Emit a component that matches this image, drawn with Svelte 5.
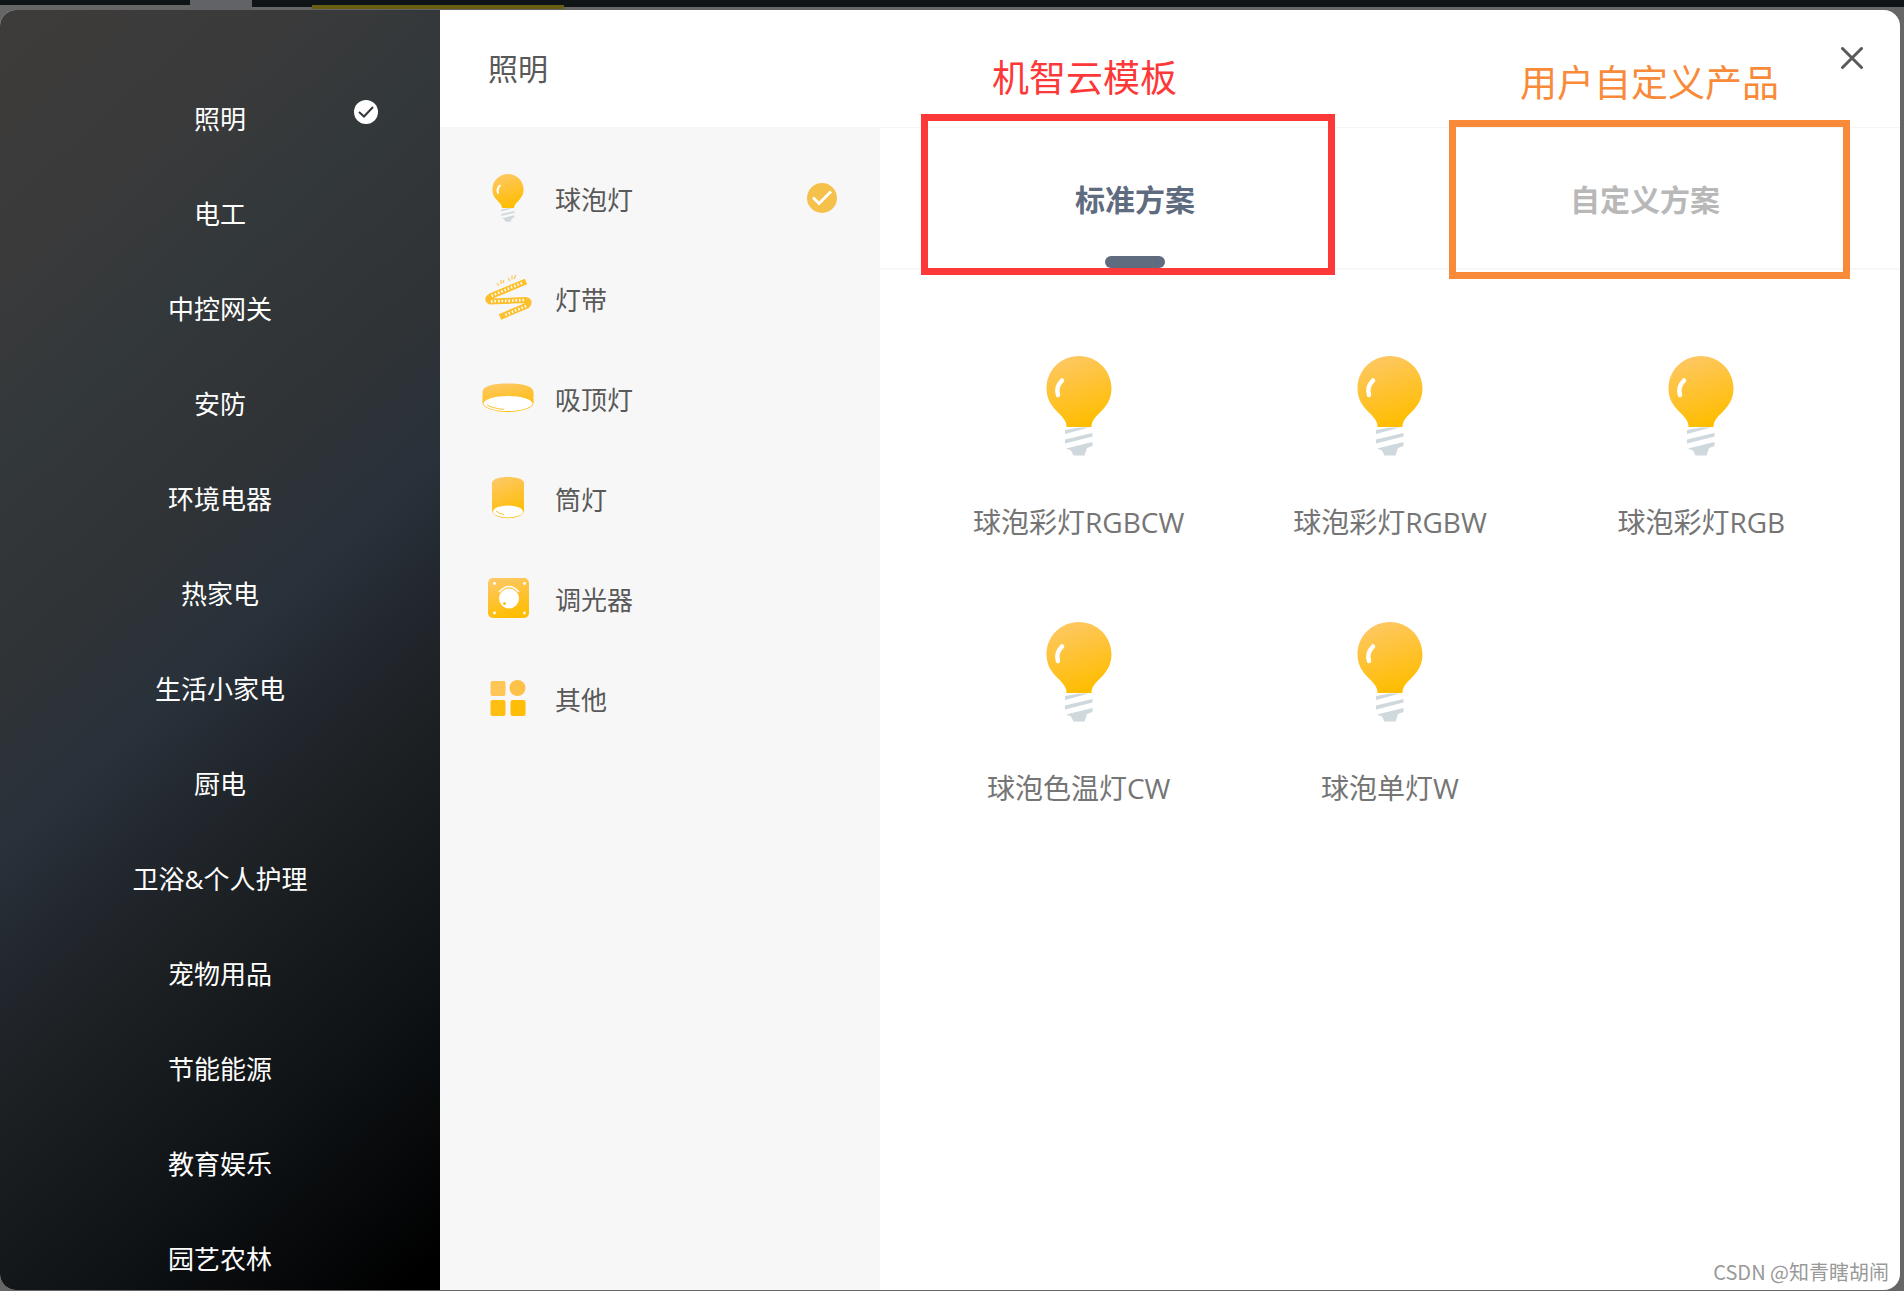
<script lang="ts">
    type Category = { name: string; icon: string };

    const groups = [
        "照明",
        "电工",
        "中控网关",
        "安防",
        "环境电器",
        "热家电",
        "生活小家电",
        "厨电",
        "卫浴&个人护理",
        "宠物用品",
        "节能能源",
        "教育娱乐",
        "园艺农林",
    ];

    const categories: Category[] = [
        { name: "球泡灯", icon: "bulb" },
        { name: "灯带", icon: "strip" },
        { name: "吸顶灯", icon: "ceiling" },
        { name: "筒灯", icon: "downlight" },
        { name: "调光器", icon: "dimmer" },
        { name: "其他", icon: "other" },
    ];

    const products = ["球泡彩灯RGBCW", "球泡彩灯RGBW", "球泡彩灯RGB", "球泡色温灯CW", "球泡单灯W"];

    let group = $state(groups[0]);
    let category = $state("球泡灯");
    let tab = $state("standard");
</script>

{#snippet Bulb()}
    <svg class="bulb" viewBox="0 0 66 100" aria-hidden="true">
        <path
            d="M33 0C14.500 0 .5 14.500 .5 32.500C.5 43 5.500 50 11 55.500C16 60.500 20.500 64.500 20.500 71H45.500C45.500 64.500 50 60.500 54.500 56C60.500 50 65.500 43 65.500 32.500C65.500 14.500 51 0 33 0Z"
            fill="url(#amber)"
        />
        <path d="M16 24.500Q9.500 31 12 39" fill="none" stroke="#fff" stroke-width="4.500" stroke-linecap="round" />
        <path
            d="M19 74L33 71.500H43L19 78ZM19 83.500L46.500 77V80.500L19 87.500ZM20 92.500L46.500 86V90L41 92L38.500 99.500H27.500L25 94.500Z"
            fill="#cfd8dd"
        />
    </svg>
{/snippet}

{#snippet Icon(name: string)}
    {#if name === "bulb"}
        {@render Bulb()}
    {:else}
        <svg class="icon" viewBox="0 0 52 52" aria-hidden="true">
            {#if name === "strip"}
                <path
                    d="M44 9.500L9 24Q4 27 8 29.500L43 28Q49 29 45 33.500L18 45"
                    fill="none"
                    stroke="#fdc02c"
                    stroke-width="6"
                    stroke-linejoin="round"
                />
                <g fill="none" stroke="#fff" stroke-width="2.600" stroke-dasharray="1.500 2">
                    <path d="M40 11L9 24" />
                    <path d="M9 29.500L42 28" />
                    <path d="M44 34L22 43.500" />
                </g>
                <path
                    d="M15 11L17 14M19 8V12M22 8L21 11M26 6L28 9M30 3.500V7.500M34 3L32 7"
                    fill="none"
                    stroke="#fdc45a"
                    stroke-width="1.200"
                />
            {:else if name === "ceiling"}
                <path d="M.5 20C.5 14 12 11.500 26 11.500S51.500 14 51.500 20V31A25.500 9 0 0 1 .5 31Z" fill="url(#amber)" />
                <ellipse cx="26" cy="31.500" rx="24.500" ry="7.500" fill="#fff" />
                <path d="M5 33Q10 36 22 37.500" fill="none" stroke="#fdc235" />
            {:else if name === "downlight"}
                <path d="M10 11C10 3 42 3 42 11V38C42 49 10 49 10 38Z" fill="url(#amber)" />
                <ellipse cx="26" cy="39.500" rx="15" ry="6" fill="#fff" />
                <path d="M14 39Q17 42 22 42.500" fill="none" stroke="#fdc235" />
            {:else if name === "dimmer"}
                <rect x="6" y="6" width="41" height="40" rx="5" fill="url(#amber)" />
                <circle cx="27" cy="26.500" r="10" fill="#fff" />
                <path d="M17 20Q27 9 37 20" fill="none" stroke="#fff" stroke-width="1.500" />
                <g fill="#fff">
                    <circle cx="12.500" cy="11.500" r="1.400" />
                    <circle cx="42.500" cy="11.500" r="1.400" />
                    <circle cx="12.500" cy="41" r="1.400" />
                    <circle cx="42.500" cy="41" r="1.400" />
                </g>
                <circle cx="22.500" cy="31.500" r="1.500" fill="#fdc020" />
            {:else}
                <g>
                    <rect x="8.500" y="9" width="15" height="15" rx="2" fill="#fec557" />
                    <circle cx="35.500" cy="16" r="8" fill="#fec148" />
                    <rect x="8.500" y="28" width="15" height="16" rx="2" fill="#ffbf12" />
                    <rect x="28.500" y="28" width="15" height="16" rx="2" fill="#ffbd06" />
                </g>
            {/if}
        </svg>
    {/if}
{/snippet}

<svg class="defs" width="0" height="0" aria-hidden="true">
    <defs>
        <linearGradient id="amber" x1="0.2" y1="0" x2="0.5" y2="1">
            <stop offset="0" stop-color="#fec866" />
            <stop offset="1" stop-color="#ffbd00" />
        </linearGradient>
    </defs>
</svg>

<div class="page">
    <div class="backdrop">
        <span class="active-tab"></span>
        <span class="rest"><span class="mark"></span></span>
    </div>

    <main class="dialog">
        <nav class="groups">
            {#each groups as name}
                <button class="group" onclick={() => (group = name)}>
                    {name}
                    {#if group === name}
                        <svg class="group-check" viewBox="0 0 24 24" aria-hidden="true">
                            <circle cx="12" cy="12" r="12" fill="#fff" />
                            <path d="M5 12L10 16.500L19 7" fill="none" stroke="#35383a" stroke-width="2" />
                        </svg>
                    {/if}
                </button>
            {/each}
        </nav>

        <section class="content">
            <header>
                <h1>{group}</h1>
                <button class="close" aria-label="关闭">
                    <svg viewBox="0 0 22 22" aria-hidden="true">
                        <path d="M1.500 1.500L20.500 20.500M20.500 1.500L1.500 20.500" stroke="#595959" stroke-width="3" stroke-linecap="round" />
                    </svg>
                </button>
            </header>

            <div class="columns">
                <nav class="categories">
                    {#each categories as item}
                        <button class="category" onclick={() => (category = item.name)}>
                            <span class="icon-box">{@render Icon(item.icon)}</span>
                            <span class="label">{item.name}</span>
                            {#if category === item.name}
                                <svg class="check" viewBox="0 0 30 30" aria-hidden="true">
                                    <circle cx="15" cy="15" r="15" fill="#f6c14b" />
                                    <path d="M6 14.500L12 20.500L24 8.500" fill="none" stroke="#fff" stroke-width="2.800" />
                                </svg>
                            {/if}
                        </button>
                    {/each}
                </nav>

                <div class="plans">
                    <div class="tabs">
                        <div class="tab-cell">
                            <button class="tab" class:selected={tab === "standard"} onclick={() => (tab = "standard")}>
                                标准方案
                            </button>
                            <span class="note red">机智云模板</span>
                            <span class="frame red"></span>
                        </div>
                        <div class="tab-cell">
                            <button class="tab" class:selected={tab === "custom"} onclick={() => (tab = "custom")}>
                                自定义方案
                            </button>
                            <span class="note orange">用户自定义产品</span>
                            <span class="frame orange"></span>
                        </div>
                    </div>

                    <div class="products">
                        {#each products as product}
                            <button class="product">
                                {@render Bulb()}
                                <span>{product}</span>
                            </button>
                        {/each}
                    </div>
                </div>
            </div>
        </section>
        <span class="watermark">CSDN @知青瞎胡闹</span>
    </main>
</div>

<style>
    :global(body) {
        background: #666;
    }

    .defs {
        position: absolute;
    }

    .page {
        display: flex;
        flex-direction: column;
        box-sizing: border-box;
        height: 100vh;
        padding: 0 4px 1px 0;
        font-family: "Open Sans", "Noto Sans CJK SC", sans-serif;
    }

    button {
        padding: 0;
        border: none;
        background: none;
        color: inherit;
        font: inherit;
        cursor: pointer;
    }

    .backdrop {
        display: flex;
        flex: none;
        height: 10px;
        margin-right: -4px;
        background: linear-gradient(#0f1417 5px, #666 5px);
    }

    .active-tab {
        width: 62px;
        margin-left: 190px;
        background: #626366;
    }

    .rest {
        flex: 1;
        padding-top: 5px;
        background: linear-gradient(#0f1417 7px, #666 7px);
    }

    .mark {
        display: block;
        width: 252px;
        height: 4px;
        margin-left: 60px;
        background: #685e12;
    }

    .dialog {
        position: relative;
        display: flex;
        flex: 1;
        min-height: 0;
        border-radius: 16px;
        overflow: hidden;
        background: #fff;
    }

    .groups {
        box-sizing: border-box;
        flex: none;
        width: 440px;
        padding-top: 61px;
        overflow: hidden;
        background: linear-gradient(
            138deg,
            #3e3c3a 0%,
            #3a3a3b 16%,
            #33383a 26%,
            #2f3336 40%,
            #29313a 50%,
            #22272e 58%,
            #1b1f21 67%,
            #0f1316 81%,
            #000 98%
        );
        color: #fff;
    }

    .group {
        position: relative;
        display: block;
        width: 100%;
        height: 95px;
        font-size: 26px;
        line-height: 40px;
    }

    .group-check {
        position: absolute;
        top: 29px;
        right: 62px;
        width: 24px;
        height: 24px;
    }

    .content {
        display: flex;
        flex: 1;
        flex-direction: column;
        min-width: 0;
    }

    header {
        display: flex;
        align-items: center;
        justify-content: space-between;
        height: 117px;
        padding: 0 37px 0 48px;
        color: #595959;
    }

    h1 {
        margin: 0;
        font-size: 30px;
        font-weight: 400;
        line-height: 40px;
    }

    .close {
        align-self: flex-start;
        width: 22px;
        height: 22px;
        margin-top: 37px;
    }

    .close svg {
        display: block;
    }

    .columns {
        display: flex;
        flex: 1;
    }

    .categories {
        box-sizing: border-box;
        flex: none;
        width: 440px;
        padding-top: 21px;
        background: #f7f7f7;
    }

    .category {
        display: flex;
        align-items: center;
        box-sizing: border-box;
        width: 100%;
        height: 100px;
        padding: 0 43px 0 42px;
        color: #595959;
        font-size: 26px;
        line-height: 40px;
        text-align: left;
    }

    .icon-box {
        display: flex;
        align-items: center;
        justify-content: center;
        width: 52px;
        height: 52px;
        margin-right: 21px;
    }

    .icon {
        width: 52px;
        height: 52px;
    }

    .label {
        flex: 1;
        padding-top: 3px;
    }

    .check {
        width: 30px;
        height: 30px;
    }

    .bulb {
        width: 66px;
        height: 100px;
    }

    .icon-box .bulb {
        width: 32px;
        height: 48px;
    }

    .plans {
        flex: 1;
        min-width: 0;
    }

    .tabs {
        display: flex;
        border-top: 1px solid #f5f5f5;
        border-bottom: 2px solid #f7f7f7;
    }

    .tab-cell {
        position: relative;
        flex: 1;
    }

    .tab {
        position: relative;
        box-sizing: border-box;
        width: 100%;
        height: 140px;
        padding-top: 3px;
        color: #b8b8b8;
        font-size: 30px;
        font-weight: 700;
        line-height: 40px;
    }

    .tab.selected {
        color: #5f6c80;
    }

    .tab.selected::after {
        content: "";
        position: absolute;
        bottom: 0;
        left: 50%;
        width: 60px;
        height: 12px;
        margin-left: -30px;
        border-radius: 6px;
        background: #5f6c80;
    }

    .frame {
        position: absolute;
        border: 7px solid;
        pointer-events: none;
    }

    .frame.red {
        inset: -14px 55px -7px 41px;
    }

    .frame.orange {
        inset: -8px 50px -11px 59px;
    }

    .note {
        position: absolute;
        font-size: 37px;
        line-height: 40px;
        white-space: nowrap;
    }

    .note.red {
        top: -70px;
        left: 112px;
    }

    .note.orange {
        top: -65px;
        left: 130px;
    }

    .red {
        color: #fd3838;
    }

    .orange {
        color: #f98a3a;
    }

    .products {
        display: grid;
        grid-template-columns: repeat(3, 1fr);
        padding: 54px 43px 0;
    }

    .product {
        display: flex;
        flex-direction: column;
        align-items: center;
        box-sizing: border-box;
        height: 266px;
        padding-top: 32px;
        color: #757575;
        font-size: 28px;
    }

    .product span {
        margin-top: 46px;
        line-height: 40px;
    }

    .watermark {
        position: absolute;
        right: 11px;
        bottom: 3px;
        color: #999;
        font-family: "Noto Sans CJK SC", sans-serif;
        font-size: 20px;
        line-height: 30px;
    }
</style>
